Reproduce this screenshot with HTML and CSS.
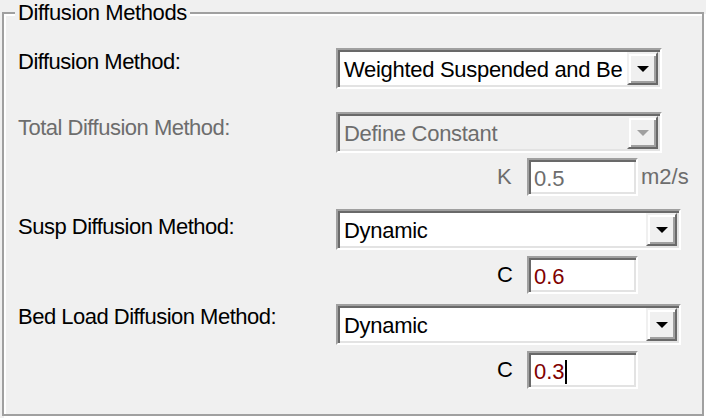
FILE: index.html
```html
<!DOCTYPE html>
<html>
<head>
<meta charset="utf-8">
<link rel="stylesheet" href="styles.css">
</head>
<body>
<fieldset class="group">
  <legend class="group-title">Diffusion Methods</legend>

  <div class="row row-1">
    <span class="lbl">Diffusion Method:</span>
    <div class="combo combo-short">
      <span class="combo-text">Weighted Suspended and Be</span>
      <span class="combo-btn"><span class="arrow"></span></span>
    </div>
  </div>

  <div class="row row-2 disabled">
    <span class="lbl">Total Diffusion Method:</span>
    <div class="combo combo-short">
      <span class="combo-text">Define Constant</span>
      <span class="combo-btn"><span class="arrow"></span></span>
    </div>
  </div>

  <div class="param param-1 disabled">
    <span class="plbl">K</span>
    <span class="edit">0.5</span>
    <span class="unit">m2/s</span>
  </div>

  <div class="row row-3">
    <span class="lbl">Susp Diffusion Method:</span>
    <div class="combo combo-long">
      <span class="combo-text">Dynamic</span>
      <span class="combo-btn"><span class="arrow"></span></span>
    </div>
  </div>

  <div class="param param-2">
    <span class="plbl">C</span>
    <span class="edit value">0.6</span>
  </div>

  <div class="row row-4">
    <span class="lbl">Bed Load Diffusion Method:</span>
    <div class="combo combo-long">
      <span class="combo-text">Dynamic</span>
      <span class="combo-btn"><span class="arrow"></span></span>
    </div>
  </div>

  <div class="param param-3">
    <span class="plbl">C</span>
    <span class="edit value">0.3<span class="caret"></span></span>
  </div>
</fieldset>
</body>
</html>
```

FILE: styles.css
```css
html, body {
  margin: 0;
  padding: 0;
  background: #f0f0f0;
}
body {
  width: 706px;
  height: 418px;
  overflow: hidden;
  font-family: "Liberation Sans", Arial, sans-serif;
  font-size: 22px;
  color: #000;
}
.group {
  box-sizing: border-box;
  margin: 0 0 0 2px;
  padding: 0 0 0 14px;
  width: 702px;
  height: 416px;
  border: 2px solid #a0a0a0;
  box-shadow: inset 2px 2px 0 #fff, 2px 2px 0 #fff;
  min-width: 0;
}
.group-title {
  margin-left: -3px;
  padding: 0 3px;
  line-height: 26px;
  letter-spacing: -0.4px;
  background: #f0f0f0;
}
.row {
  display: flex;
  align-items: flex-start;
}
.lbl {
  width: 318px;
  line-height: 26px;
  padding-top: 3px;
  letter-spacing: -0.5px;
  white-space: nowrap;
}
.row-1 { margin-top: 22px; }
.row-1 .lbl { padding-top: 1px; }
.row-2 { margin-top: 23px; }
.row-3 { margin-top: 13px; }
.row-3 .lbl { padding-top: 5px; }
.row-4 { margin-top: 10px; }
.row-4 .lbl { padding-top: 0; }

.disabled { color: #6d6d6d; }

.combo {
  box-sizing: border-box;
  height: 41px;
  display: flex;
  border-style: solid;
  border-width: 2px;
  border-color: #a0a0a0 #fff #fff #a0a0a0;
  box-shadow: inset 2px 2px 0 #696969, inset -2px -2px 0 #e3e3e3;
  padding: 2px;
  background: #fff;
}
.disabled .combo { background: #f0f0f0; }
.combo-short { width: 326px; }
.combo-long { width: 345px; }
.combo-text {
  flex: 1;
  min-width: 0;
  white-space: nowrap;
  line-height: 33px;
  padding: 1px 0 0 4px;
  box-sizing: border-box;
  height: 33px;
  letter-spacing: -0.3px;
}
.combo-btn {
  box-sizing: border-box;
  width: 31px;
  height: 33px;
  flex: none;
  background: #f0f0f0;
  border-style: solid;
  border-width: 2px;
  border-color: #f0f0f0 #696969 #696969 #f0f0f0;
  box-shadow: inset 2px 2px 0 #fff, inset -2px -2px 0 #a0a0a0;
  display: flex;
  align-items: center;
  justify-content: center;
}
.arrow {
  width: 0;
  height: 0;
  border-left: 6px solid transparent;
  border-right: 6px solid transparent;
  border-top: 6px solid #000;
  margin-top: 1px;
}
.disabled .arrow { border-top-color: #a0a0a0; }

.param {
  display: flex;
  align-items: center;
  padding-left: 479px;
}
.param-1 { margin-top: 5px; }
.param-2 { margin-top: 6px; }
.param-3 { margin-top: 6px; }
.plbl {
  width: 30px;
  line-height: 26px;
}
.edit {
  box-sizing: border-box;
  width: 111px;
  height: 38px;
  border-style: solid;
  border-width: 2px;
  border-color: #a0a0a0 #fff #fff #a0a0a0;
  box-shadow: inset 2px 2px 0 #696969, inset -2px -2px 0 #e3e3e3;
  background: #fff;
  padding: 4px 0 0 5px;
  line-height: 28px;
  display: flex;
  align-items: center;
}
.value { color: #800000; }
.caret {
  display: inline-block;
  width: 2px;
  height: 24px;
  background: #000;
}
.unit {
  margin-left: 3px;
  line-height: 26px;
}
```
